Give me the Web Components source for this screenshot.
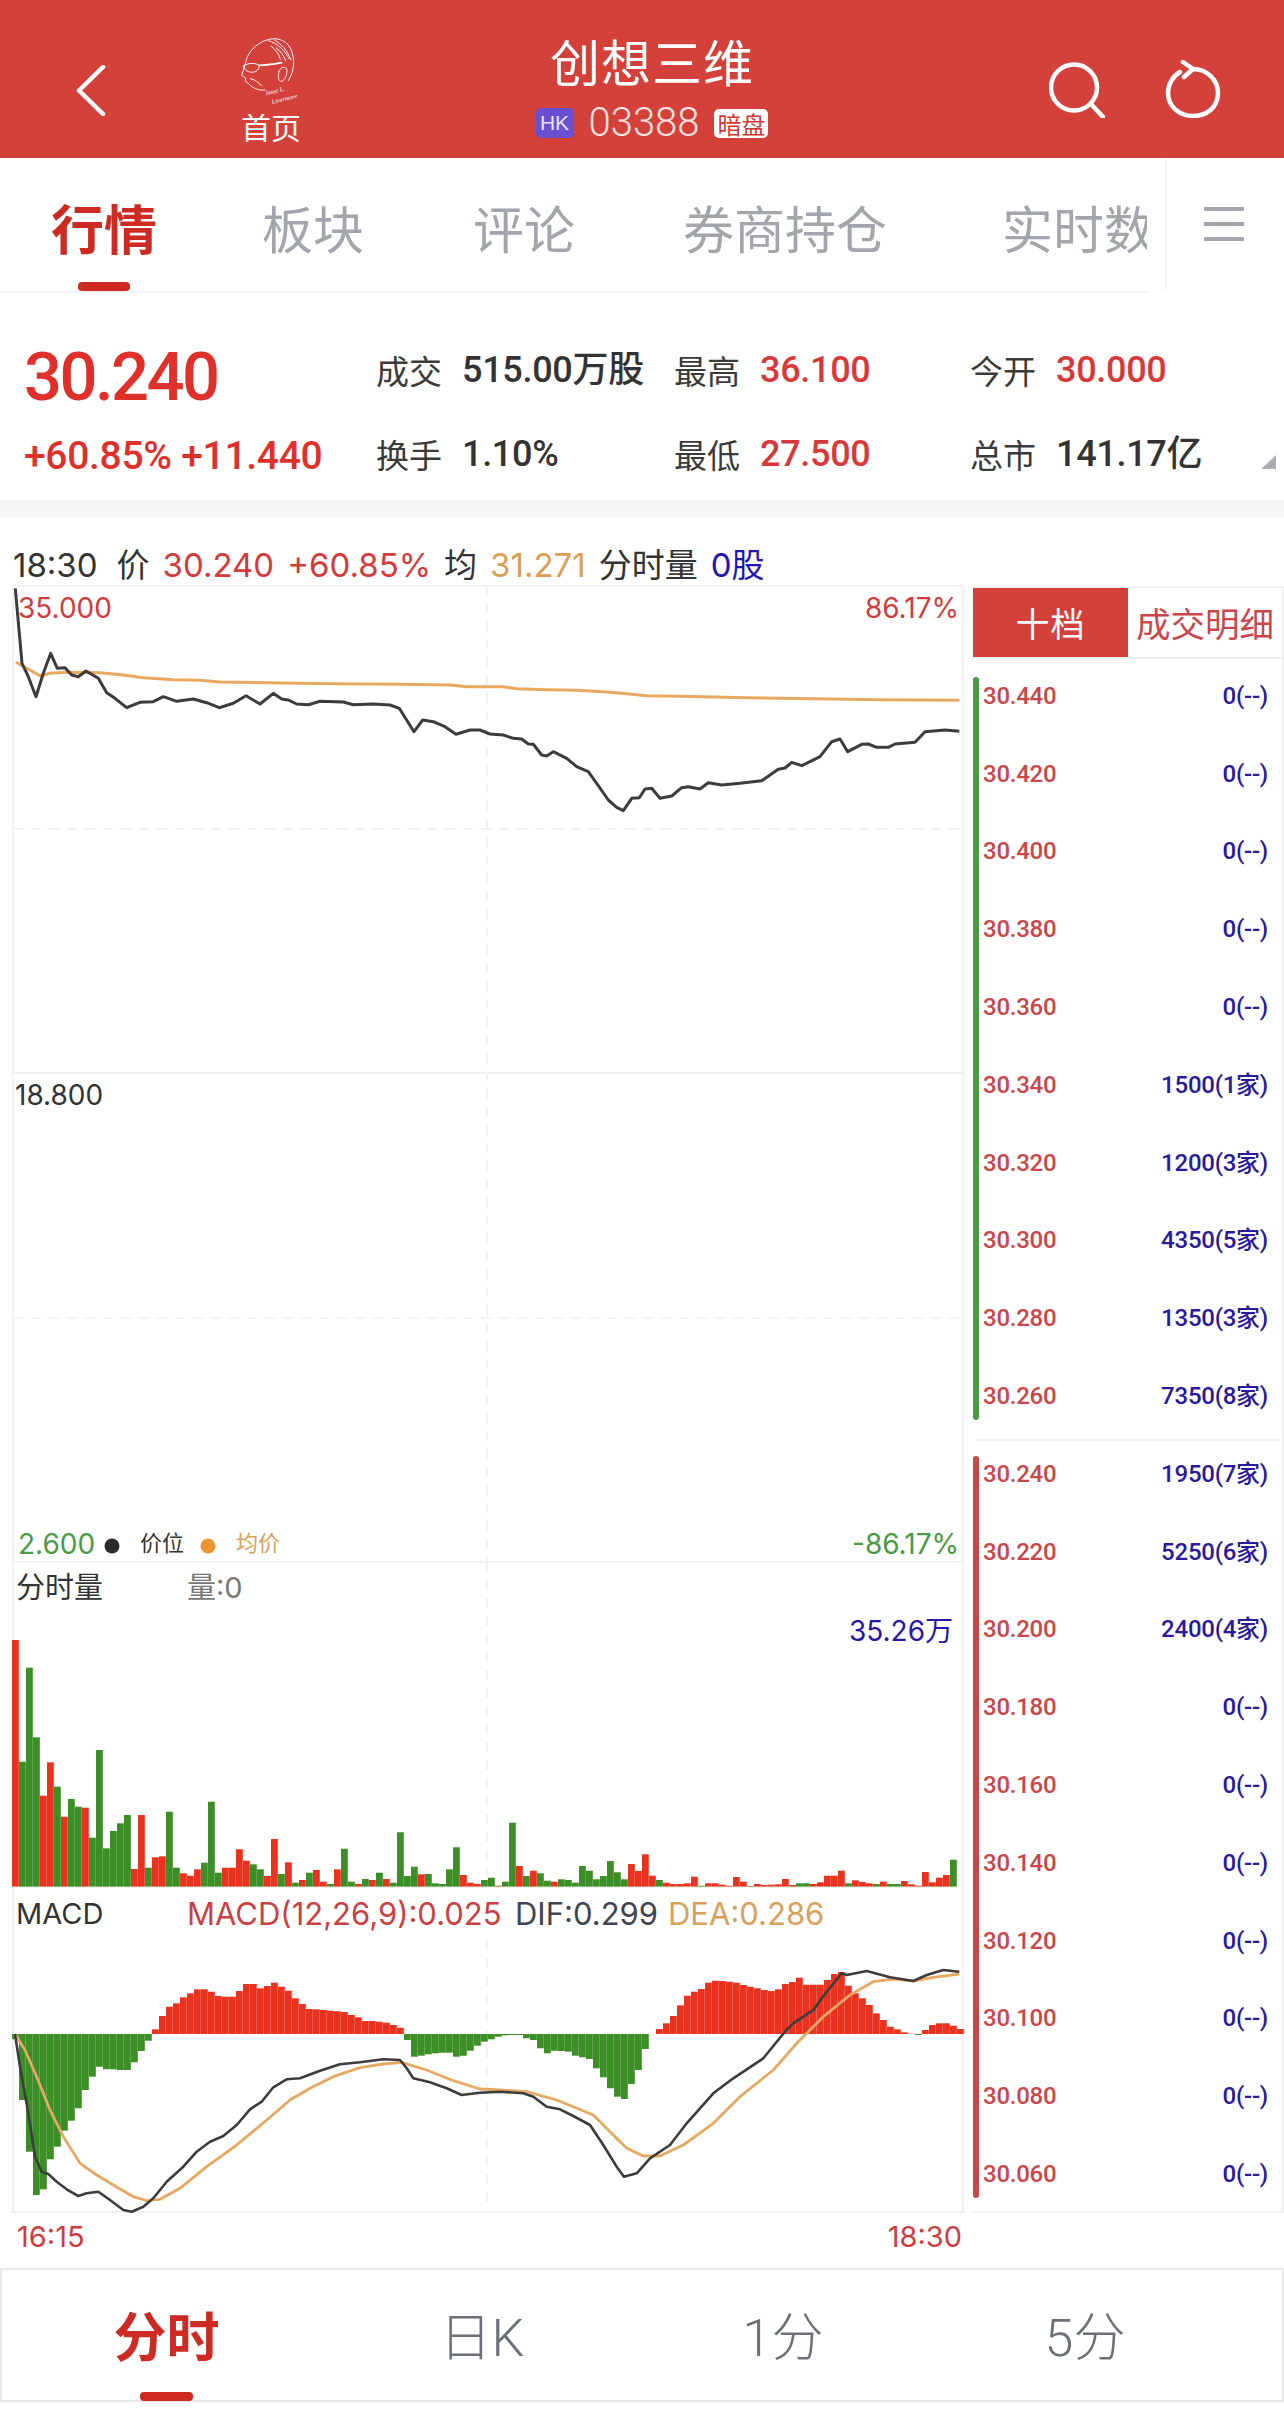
<!DOCTYPE html>
<html lang="zh">
<head>
<meta charset="utf-8">
<title>创想三维</title>
<style>
  html, body { margin: 0; padding: 0; background: #fff; }
  body { width: 1284px; height: 2413px; overflow: hidden; font-family: "Noto Sans CJK SC", sans-serif; }
  .row { display: flex; align-items: flex-start; }
  .gap { height: 17px; background: #f6f6f6; }
</style>
</head>
<body>
<stock-header></stock-header>
<tab-strip></tab-strip>
<quote-summary>
  <quote-cell label="成交" tone="dark">515.00万股</quote-cell>
  <quote-cell label="最高" tone="red">36.100</quote-cell>
  <quote-cell label="今开" tone="red">30.000</quote-cell>
  <quote-cell label="换手" tone="dark">1.10%</quote-cell>
  <quote-cell label="最低" tone="red">27.500</quote-cell>
  <quote-cell label="总市" tone="dark">141.17亿</quote-cell>
</quote-summary>
<div class="gap"></div>
<info-line></info-line>
<div class="row">
  <trend-chart></trend-chart>
  <depth-panel></depth-panel>
</div>
<time-axis></time-axis>
<period-bar></period-bar>

<script>
const NUM = 'Roboto, "Noto Sans CJK SC", sans-serif';
const UI = 'Inter, "Noto Sans CJK SC", sans-serif';

class StockHeader extends HTMLElement {
  constructor() {
    super();
    this.attachShadow({ mode: 'open' });
    this.shadowRoot.innerHTML = `
      <style>
        :host { display: flex; align-items: flex-start; height: 158px; padding-left: 76px; box-sizing: border-box;
          background: #d4413a; color: #fff; font-family: "Noto Sans CJK SC", sans-serif; }
        .back { margin-top: 65px; width: 30px; height: 51px; }
        .brand { margin-left: 135px; width: 60px; padding-top: 37px; display: flex; flex-direction: column; align-items: center; }
        .brand svg { display: block; width: 60px; height: 70px; }
        .brand span { font-size: 30px; line-height: 36px; margin-top: 1px; white-space: nowrap; }
        .center { width: 702px; display: flex; flex-direction: column; align-items: center; padding-top: 33px; }
        .title { font-size: 50px; line-height: 54px; letter-spacing: 1px; }
        .sub { display: flex; align-items: center; height: 30px; margin-top: 21px; gap: 15px; }
        .hk { width: 38px; height: 30px; border-radius: 5px; background: #6a4fd0; font: 21px/30px "Liberation Sans", sans-serif;
          text-align: center; color: #e8e4ff; }
        .code { font: 300 40px/30px Roboto, sans-serif; color: #f9e3e1; }
        .tag { width: 54px; height: 29px; border-radius: 5px; background: #fff; color: #cf3a36; font-size: 24px; line-height: 29px; text-align: center; white-space: nowrap; }
        .search { margin: 62px 0 0 46px; width: 56px; height: 56px; }
        .refresh { margin: 60px 0 0 60px; width: 56px; height: 58px; }
      </style>
      <svg class="back" viewBox="0 0 30 51"><path d="M27 2 L3 25.5 L27 49" fill="none" stroke="#fff" stroke-width="4.5" stroke-linecap="round" stroke-linejoin="round"/></svg>
      <div class="brand">
        <svg viewBox="132 51 180 210" fill="none" stroke="#fff" stroke-width="2.8" stroke-linecap="round" stroke-linejoin="round">
          <path d="M146 128 C150 92 192 56 234 56 C268 58 288 84 290 124 C290 148 284 166 274 182"/>
          <path d="M146 128 L143 138 L134 166 L146 174 L145 184 L156 192 C168 206 188 212 204 210"/>
          <path d="M214 62 C240 70 262 88 276 116 M232 60 C254 72 270 90 282 120 M238 84 C250 92 260 106 266 122 M222 78 C236 88 246 102 250 118"/>
          <path d="M140 138 C152 128 176 128 186 136 C188 150 174 160 158 156 C148 154 142 148 140 138 Z"/>
          <path d="M186 136 C206 136 232 132 254 128" stroke-width="5"/>
          <path d="M246 154 C250 138 270 138 270 152 C270 168 260 186 250 184 C242 180 244 166 246 154 Z"/>
          <path d="M160 176 C172 178 184 186 194 198"/>
          <g stroke="none" fill="#fff" font-family="Liberation Serif, serif" font-style="italic" font-size="19">
            <text x="206" y="226" transform="rotate(-14 206 226)">Jesse L.</text>
            <text x="226" y="252" transform="rotate(-14 226 252)">Livermore</text>
          </g>
        </svg>
        <span>首页</span>
      </div>
      <div class="center">
        <div class="title">创想三维</div>
        <div class="sub">
          <span class="hk">HK</span><span class="code">03388</span><span class="tag">暗盘</span>
        </div>
      </div>
      <svg class="search" viewBox="0 0 56 56" fill="none" stroke="#fff" stroke-width="4.5" stroke-linecap="round">
        <circle cx="25" cy="25.5" r="23"/><path d="M42 42 L54 55"/>
      </svg>
      <svg class="refresh" viewBox="0 0 56 58" fill="none" stroke="#fff" stroke-width="4.5" stroke-linecap="round" stroke-linejoin="round">
        <path d="M28 9 C42 9 53 20 53 33 C53 47 42 56 28 56 C14 56 3 46 3 33 C3 24 8 16 15 12"/>
        <path d="M18 2 L28 9 L19 17"/>
      </svg>`;
  }
}
customElements.define('stock-header', StockHeader);

class TabStrip extends HTMLElement {
  constructor() {
    super();
    this.attachShadow({ mode: 'open' });
    // 标签之间的间距不完全相等
    const tabs = [['行情', 51], ['板块', 105], ['评论', 109], ['券商持仓', 108], ['实时数', 115]];
    this.shadowRoot.innerHTML = `
      <style>
        :host { display: flex; height: 135px; font-family: "Noto Sans CJK SC", sans-serif; background: #fff; }
        .tabs { width: 1147px; height: 135px; box-sizing: border-box; border-bottom: 2px solid #eef2f2; overflow: hidden; display: flex; }
        .tab { position: relative; flex: none; font-size: 51px; line-height: 60px; padding-top: 39px; height: 94px; color: #a3a5ad; white-space: nowrap; }
        .tab.on { color: #cc2a22; font-weight: 700; font-size: 53px; }
        .tab.on::after { content: ""; position: absolute; left: 27px; width: 52px; height: 9px; top: 124px; border-radius: 4px; background: #cc2a22; }
        .menu { flex: 1; margin-left: 18px; border-left: 2px solid #f5f5f5; height: 132px; padding-left: 37px; }
        .menu svg { display: block; width: 40px; height: 36px; margin-top: 48px; }
      </style>
      <div class="tabs">${tabs.map((t, i) => `<div class="tab${i === 0 ? ' on' : ''}" style="margin-left:${t[1]}px">${t[0]}</div>`).join('')}</div>
      <div class="menu"><svg viewBox="0 0 40 36" fill="#a3a5ad"><rect y="1" width="40" height="4"/><rect y="16" width="40" height="4"/><rect y="31" width="40" height="4"/></svg></div>`;
  }
}
customElements.define('tab-strip', TabStrip);

class QuoteCell extends HTMLElement {
  constructor() {
    super();
    this.attachShadow({ mode: 'open' });
    const dark = this.getAttribute('tone') === 'dark';
    this.shadowRoot.innerHTML = `
      <style>
        :host { display: flex; align-items: center; height: 84px; white-space: nowrap; }
        .l { font: 33px/40px "Noto Sans CJK SC", sans-serif; color: #3a3a3a; width: 86px; flex: none; }
        .v { font: 500 36px/40px ${NUM}; letter-spacing: -.3px; color: ${dark ? '#333' : '#d7393b'}; }
      </style>
      <span class="l">${this.getAttribute('label')}</span><span class="v"><slot></slot></span>`;
  }
}
customElements.define('quote-cell', QuoteCell);

class QuoteSummary extends HTMLElement {
  constructor() {
    super();
    this.attachShadow({ mode: 'open' });
    this.shadowRoot.innerHTML = `
      <style>
        :host { display: flex; position: relative; height: 207px; box-sizing: border-box; padding: 35px 0 0 26px; background: #fff; }
        .now { width: 350px; flex: none; }
        .price { font: 500 67px/98px ${NUM}; letter-spacing: -2.6px; color: #e0302c; height: 84px; margin-left: -2px; }
        .change { font: 500 39px/88px ${NUM}; letter-spacing: -.3px; color: #e0302c; white-space: nowrap; height: 84px; margin-left: -2px; }
        .cells { display: grid; grid-template-columns: 298px 296px 1fr; grid-auto-rows: 84px; flex: 1; }
        .corner { position: absolute; right: 8px; bottom: 31px; width: 0; height: 0; border-left: 15px solid transparent; border-bottom: 14px solid #a9adb5; }
      </style>
      <div class="now"><div class="price">30.240</div><div class="change">+60.85% +11.440</div></div>
      <div class="cells"><slot></slot></div>
      <div class="corner"></div>`;
  }
}
customElements.define('quote-summary', QuoteSummary);

class InfoLine extends HTMLElement {
  constructor() {
    super();
    this.attachShadow({ mode: 'open' });
    this.shadowRoot.innerHTML = `
      <style>
        :host { display: flex; align-items: center; gap: 13px; height: 68px; box-sizing: border-box; padding: 28px 0 0 13px;
          font: 33px/40px ${UI}; color: #333; white-space: nowrap; }
        .t { margin-right: 6px; }
        .r { color: #d23a3c; } .o { color: #dd9f55; } .b { color: #2414b0; }
      </style>
      <span class="t">18:30</span><span>价</span><span class="r">30.240</span><span class="r">+60.85%</span><span>均</span>
      <span class="o">31.271</span><span>分时量</span><span class="b">0股</span>`;
  }
}
customElements.define('info-line', InfoLine);

// 分时量: 颜色 + 顶部y, 从参考图量出来的
const VOL = 'r420 g785 g503 g712 r887 r787 g860 r950 g897 g920 r923 g1013 g750 g1045 g993 g970 g945 r1107 r945 g1103 r1072 r1069 g935 g1103 r1120 r1127 r1108 g1088 g905 g1118 r1103 r1103 r1048 r1082 g1093 g1108 r1128 r1017 g1122 r1087 g1148 r1140 g1118 r1110 r1145 g1152 r1108 g1046 g1145 r1152 g1137 r1140 g1118 r1137 g1148 g997 g1128 g1100 r1123 g1122 g1150 g1152 g1108 g1042 r1125 r1148 r1152 g1140 g1133 r1157 g1145 g968 r1098 g1128 r1112 g1120 g1142 r1145 g1138 g1140 g1148 g1098 g1112 g1138 g1128 g1083 g1117 g1138 r1092 r1113 r1063 r1127 g1140 r1148 r1152 r1152 r1150 r1130 g1157 r1150 r1150 r1154 r1157 r1131 r1145 r1158 r1152 r1155 r1154 r1153 r1137 r1155 g1150 g1150 r1152 r1147 r1127 r1127 r1112 g1150 r1141 r1146 r1150 g1152 r1145 g1152 g1152 r1143 r1153 r1157 r1116 r1147 r1133 r1125 g1079'.split(' ');

const MACD_BARS = [478, 660, 815, 945, 928, 838, 800, 752, 722, 685, 630, 590, 560, 568, 568, 570, 570, 547, 513, 482,
  448, 408, 380, 370, 352, 340, 328, 328, 335, 348, 350, 350, 333, 312, 312, 325, 318, 308, 320, 332, 355, 372, 387, 388, 390, 392, 394, 396, 405, 412, 423, 423, 425, 428, 435, 443,
  480, 530, 527, 523, 520, 518, 518, 530, 527, 512, 497, 485, 478, 470, 466, 465, 465, 475, 480, 505, 520, 512, 513, 515, 527, 532, 537, 565, 592, 625, 650, 657, 612, 570, 507, 462,
  447, 430, 408, 376, 347, 335, 327, 308, 302, 303, 305, 308, 315, 320, 325, 330, 333, 328, 312, 306, 293, 314, 314, 314, 300, 282, 276, 317, 340, 355, 375, 400, 420, 440, 448, 457, 461, 465, 450, 435, 430, 430, 437, 447];

const PRICE_A = [[46,145],[66,370],[85,410],[108,470],[130,400],[152,340],[172,385],[195,383],[215,405],[235,410],[258,393],[295,415],[320,458],[345,475],[380,503],[420,487],[460,485],[490,470],[530,484],[580,477],[620,488],[658,503],[700,490],[738,467],[780,492],[820,460],[845,477],[865,480],[890,492],[925,494],[960,484],[1030,486],[1060,494],[1120,492],[1170,495],[1198,505],[1242,575],[1268,540],[1300,545],[1335,560],[1368,583],[1410,570]];
const PRICE_B = [[0,570],[30,582],[70,585],[100,595],[125,597],[145,612],[160,613],[185,645],[200,648],[220,635],[260,655],[290,680],[325,695],[350,730],[385,780],[410,802],[430,812],[455,775],[478,773],[495,747],[515,745],[540,775],[575,768],[605,743],[625,740],[660,747],[685,728],[725,735],[780,730],[845,722],[895,688],[915,684],[935,667],[965,677],[1020,650],[1055,605],[1080,597],[1103,635],[1145,613],[1165,612],[1190,622],[1225,622],[1245,612],[1305,607],[1335,575],[1395,570],[1438,574]];
const AVG_A = [[48,367],[80,385],[120,407],[150,400],[200,397],[300,398],[370,405],[430,413],[520,419],[600,421],[660,426],[800,428],[1000,431],[1200,433],[1350,435],[1400,440]];
const AVG_B = [[0,440],[70,440],[110,446],[200,449],[290,451],[380,456],[440,461],[500,467],[600,469],[800,473],[1000,476],[1200,479],[1438,481]];
const DIF_A = [[45,462],[60,560],[85,700],[105,830],[125,875],[145,882],[170,905],[200,928],[235,948],[260,940],[295,935],[330,960],[370,990],[395,995],[430,980],[460,955],[500,905],[550,860],[590,815],[630,785],[670,768],[710,735],[750,688],[785,665],[820,622],[860,598],[900,595],[960,572],[1020,553],[1080,547],[1150,538],[1200,540],[1220,565],[1240,595],[1290,607],[1340,625],[1385,645]];
const DIF_B = [[0,638],[60,635],[130,640],[160,650],[200,680],[240,688],[280,708],[330,735],[370,795],[410,860],[432,890],[470,880],[510,835],[570,795],[620,730],[700,640],[760,595],[850,535],[915,455],[940,430],[1000,390],[1040,335],[1085,280],[1100,285],[1160,273],[1230,292],[1300,303],[1340,285],[1390,270],[1438,275]];
const DEA_A = [[45,462],[75,510],[110,590],[150,690],[190,770],[240,850],[290,885],[340,915],[400,950],[440,962],[480,958],[540,925],[620,860],[710,795],[800,720],[870,660],[930,625],[1000,590],[1080,563],[1150,552],[1205,547],[1280,570],[1360,602]];
const DEA_B = [[0,627],[60,630],[140,635],[230,660],[340,705],[390,755],[440,805],[490,828],[540,828],[610,795],[700,730],[780,650],[880,570],[950,490],[1030,410],[1110,345],[1180,305],[1240,297],[1300,303],[1360,292],[1438,282]];

const poly = (a, b, top) => [...a.map(p => [p[0] / 3, top + p[1] / 3]), ...b.map(p => [480 + p[0] / 3, top + p[1] / 3])]
  .map(p => p[0].toFixed(1) + ',' + p[1].toFixed(1)).join(' ');
const line = (pts, color, w) => `<polyline points="${pts}" fill="none" stroke="${color}" stroke-width="${w}" stroke-linejoin="round"/>`;
const RED = '#ea3220', GREEN = '#3c8f27';

class TrendChart extends HTMLElement {
  constructor() {
    super();
    this.attachShadow({ mode: 'open' });
    const volBars = VOL.map((v, i) => {
      const top = 1500 + +v.slice(1) / 3;
      return `<rect x="${12 + i * 7}" y="${top.toFixed(1)}" width="6.8" height="${(1887 - top).toFixed(1)}" fill="${v[0] === 'r' ? RED : GREEN}"/>`;
    }).join('');
    const macdBars = MACD_BARS.map((y, i) => {
      const t = Math.min(y, 462), h = Math.abs(y - 462);
      return `<rect x="${12 + i * 7}" y="${(1880 + t / 3).toFixed(1)}" width="6.8" height="${(h / 3).toFixed(1)}" fill="${y < 462 ? RED : GREEN}"/>`;
    }).join('');
    this.shadowRoot.innerHTML = `
      <style>
        :host { display: block; position: relative; width: 964px; height: 1628px; flex: none; font: 28px/32px ${UI}; white-space: nowrap; color: #333; }
        svg { position: absolute; left: 0; top: 0; }
        .lb { position: absolute; }
        .r { color: #cf3c40; } .g { color: #4a9a45; }
        .sm { font-size: 22px; line-height: 26px; }
        .big { font-size: 29px; line-height: 34px; }
        .lg { font-size: 31px; line-height: 34px; }
      </style>
      <svg width="964" height="1628" viewBox="0 585 964 1628">
        <g stroke="#f1f1f1" stroke-width="2" fill="none">
          <path d="M13 585 V2213 M963 585 V2213 M13 586 H963 M13 1073 H963 M13 1562 H963 M13 2212 H963"/>
          <path d="M13 829 H963 M13 1318 H963 M487 585 V1562 M487 1562 V1887 M487 1940 V2213" stroke-dasharray="10 8"/>
        </g>
        ${volBars}
        <path d="M12 1887 H957" stroke="#d8e8d0" stroke-width="1"/>
        ${macdBars}
        ${line(poly(AVG_A, AVG_B, 540), '#e9a860', 3)}
        ${line(poly(PRICE_A, PRICE_B, 540), '#3c3c3c', 3)}
        ${line(poly(DEA_A, DEA_B, 1880), '#e5a964', 2.8)}
        ${line(poly(DIF_A, DIF_B, 1880), '#3c3c3c', 2.6)}
        <circle cx="112" cy="1546" r="7.5" fill="#2b2b2b"/>
        <circle cx="208" cy="1546" r="7.5" fill="#ee9433"/>
      </svg>
      <span class="lb r" style="left:18px;top:7px">35.000</span>
      <span class="lb r" style="right:5px;top:7px">86.17%</span>
      <span class="lb" style="left:15px;top:494px">18.800</span>
      <span class="lb g" style="left:18px;top:943px">2.600</span>
      <span class="lb sm" style="left:140px;top:945px">价位</span>
      <span class="lb sm" style="left:236px;top:945px;color:#d9a05c">均价</span>
      <span class="lb g" style="right:5px;top:943px">-86.17%</span>
      <span class="lb big" style="left:16px;top:986px">分时量</span>
      <span class="lb big" style="left:187px;top:986px;color:#777">量:0</span>
      <span class="lb" style="right:11px;top:1030px;color:#2a14a8">35.26万</span>
      <span class="lb big" style="left:16px;top:1312px">MACD</span>
      <span class="lb lg" style="left:187px;top:1312px;color:#c93f43">MACD(12,26,9):0.025</span>
      <span class="lb lg" style="left:515px;top:1312px;color:#3f4450">DIF:0.299</span>
      <span class="lb lg" style="left:668px;top:1312px;color:#d9a05c">DEA:0.286</span>`;
  }
}
customElements.define('trend-chart', TrendChart);

class DepthRow extends HTMLElement {
  constructor() {
    super();
    this.attachShadow({ mode: 'open' });
    this.shadowRoot.innerHTML = `
      <style>
        :host { display: flex; justify-content: space-between; align-items: center; height: 77.8px; font: 500 24px/30px ${NUM}; letter-spacing: -.25px; white-space: nowrap; }
        .p { color: #c8474a; } .q { color: #2a1a9c; }
      </style>
      <span class="p">${this.getAttribute('price')}</span><span class="q"><slot></slot></span>`;
  }
}
customElements.define('depth-row', DepthRow);

class DepthPanel extends HTMLElement {
  constructor() {
    super();
    this.attachShadow({ mode: 'open' });
    const row = r => `<depth-row price="${r[0]}">${r[1]}</depth-row>`;
    const asks = [['30.440','0(--)'],['30.420','0(--)'],['30.400','0(--)'],['30.380','0(--)'],['30.360','0(--)'],['30.340','1500(1家)'],['30.320','1200(3家)'],['30.300','4350(5家)'],['30.280','1350(3家)'],['30.260','7350(8家)']];
    const bids = [['30.240','1950(7家)'],['30.220','5250(6家)'],['30.200','2400(4家)'],['30.180','0(--)'],['30.160','0(--)'],['30.140','0(--)'],['30.120','0(--)'],['30.100','0(--)'],['30.080','0(--)'],['30.060','0(--)']];
    this.shadowRoot.innerHTML = `
      <style>
        :host { display: block; width: 320px; height: 1627px; box-sizing: border-box; margin-top: 1px; padding-left: 9px; flex: none; font-family: "Noto Sans CJK SC", sans-serif; }
        .frame { height: 1627px; box-sizing: border-box; border: solid #f1f1f1; border-width: 2px 2px 2px 0; }
        .tabs { display: flex; height: 71px; border-bottom: 2px solid #eee; box-sizing: border-box; }
        .on { width: 155px; height: 69px; background: #d4413a; color: #fff; font-size: 34px; line-height: 69px; text-align: center; letter-spacing: 1px; }
        .off { flex: 1; color: #c9474a; font-size: 34.5px; line-height: 69px; text-align: center; white-space: nowrap; }
        .group { display: flex; gap: 4px; }
        .bar { width: 6px; flex: none; border-radius: 3px; }
        .list { flex: 1; padding-right: 14px; }
        .ask .bar { background: #4a9a45; margin: 18px 0 17px; }
        .ask .list { margin-top: -2px; margin-bottom: 2px; }
        .bid { border-top: 2px solid #f1f1f1; margin-left: 3px; margin-top: 2px; height: 773px; }
        .bid .bar { background: #c8474a; margin: 15px 0 16px -3px; }
        .bid .list { margin-top: -6px; }
      </style>
      <div class="frame">
        <div class="tabs"><div class="on">十档</div><div class="off">成交明细</div></div>
        <div class="group ask"><div class="bar"></div><div class="list">${asks.map(row).join('')}</div></div>
        <div class="group bid"><div class="bar"></div><div class="list">${bids.map(row).join('')}</div></div>
      </div>`;
  }
}
customElements.define('depth-panel', DepthPanel);

class TimeAxis extends HTMLElement {
  constructor() {
    super();
    this.attachShadow({ mode: 'open' });
    this.shadowRoot.innerHTML = `
      <style>
        :host { display: flex; justify-content: space-between; width: 964px; height: 55px; box-sizing: border-box; padding: 7px 2px 0 17px; font: 29px/34px ${UI}; color: #cf3c40; }
      </style>
      <span>16:15</span><span>18:30</span>`;
  }
}
customElements.define('time-axis', TimeAxis);

class PeriodBar extends HTMLElement {
  constructor() {
    super();
    this.attachShadow({ mode: 'open' });
    this.shadowRoot.innerHTML = `
      <style>
        :host { display: grid; grid-template-columns: 329px 302px 300px 304px; height: 134px; box-sizing: border-box;
          border: 2px solid #e8e8e8; font: 52px/60px Roboto, "Noto Sans CJK SC", sans-serif; color: #6c7078; }
        div { position: relative; text-align: center; padding-top: 39px; font-weight: 300; }
        .on { color: #cc2a22; font-weight: 700; font-size: 53px; }
        .on::after { content: ""; position: absolute; left: 138px; top: 122px; width: 53px; height: 9px; border-radius: 4px; background: #cc2a22; }
      </style>
      <div class="on">分时</div><div>日K</div><div>1分</div><div>5分</div>`;
  }
}
customElements.define('period-bar', PeriodBar);
</script>
</body>
</html>
